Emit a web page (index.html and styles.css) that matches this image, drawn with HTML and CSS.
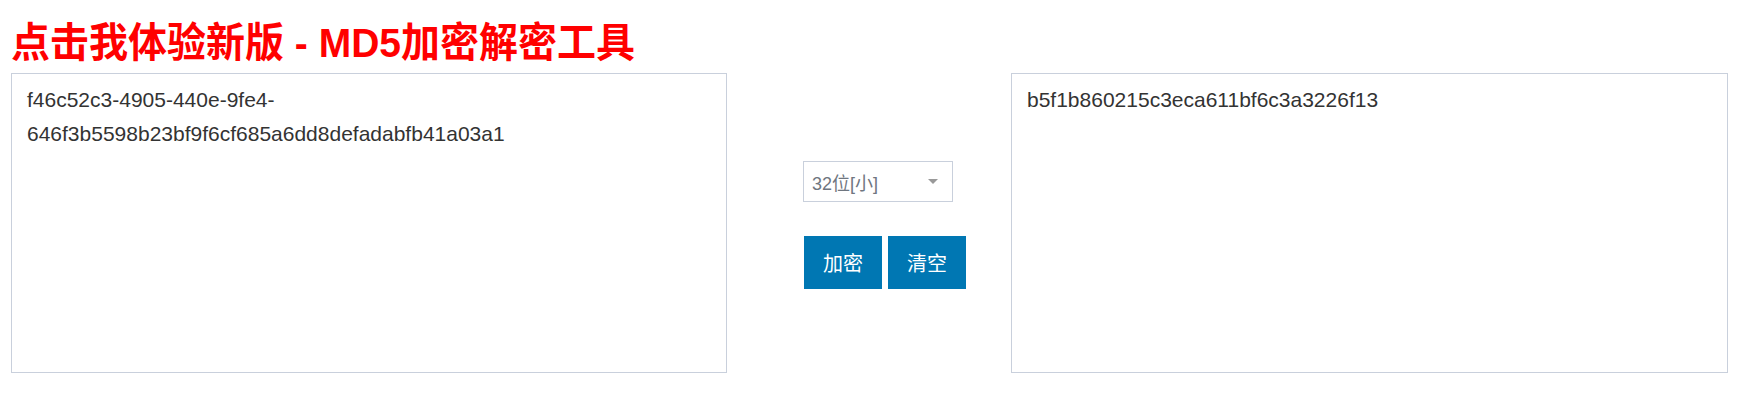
FILE: index.html
```html
<!DOCTYPE html>
<html lang="zh-CN">
<head>
<meta charset="utf-8">
<title>MD5加密解密工具</title>
<link rel="stylesheet" href="styles.css">
</head>
<body>
<div class="page">
  <h1 class="title">点击我体验新版 - MD5加密解密工具</h1>
  <div class="tool">
    <textarea class="box box-left" readonly>f46c52c3-4905-440e-9fe4-646f3b5598b23bf9f6cf685a6dd8defadabfb41a03a1</textarea>
    <div class="controls">
      <div class="select">
        <span class="select-text">32位[小]</span>
        <span class="select-arrow"></span>
      </div>
      <div class="buttons">
        <button class="btn">加密</button>
        <button class="btn">清空</button>
      </div>
    </div>
    <textarea class="box box-right" readonly>b5f1b860215c3eca611bf6c3a3226f13</textarea>
  </div>
</div>
</body>
</html>
```
FILE: styles.css
```css
html, body {
  margin: 0;
  padding: 0;
  background: #ffffff;
}
body {
  margin: 8px;
  font-family: "Liberation Sans", "Noto Sans CJK SC", sans-serif;
}
.page {
  padding-left: 3px;
}
.title {
  margin: 14px 0 7px 0;
  font-size: 39px;
  line-height: 44px;
  font-weight: bold;
  color: #ff0000;
  font-family: "Liberation Sans", "Noto Sans CJK SC", sans-serif;
  transform: scaleY(1.04);
  transform-origin: 0 80%;
}
.tool {
  display: flex;
  align-items: flex-start;
}
.box {
  box-sizing: border-box;
  height: 300px;
  margin: 0;
  padding: 9px 15px;
  border: 1px solid #c9d0dc;
  border-radius: 0;
  resize: none;
  overflow: hidden;
  font-family: "Liberation Sans", "Noto Sans CJK SC", sans-serif;
  font-size: 21px;
  line-height: 34px;
  color: #333333;
  background: #ffffff;
  outline: none;
}
.box-left {
  width: 716px;
}
.box-right {
  width: 717px;
}
.controls {
  width: 284px;
  box-sizing: border-box;
  padding: 88px 0 0 76px;
  display: flex;
  flex-direction: column;
  align-items: flex-start;
  gap: 34px;
}
.select {
  box-sizing: border-box;
  width: 150px;
  height: 41px;
  border: 1px solid #c9d0dc;
  display: flex;
  align-items: center;
  justify-content: space-between;
  padding: 0 14px 0 8px;
  background: #fff;
}
.select-text {
  font-size: 18px;
  color: #6f7680;
}
.select-arrow {
  width: 0;
  height: 0;
  border-left: 5px solid transparent;
  border-right: 5px solid transparent;
  border-top: 5px solid #999999;
}
.buttons {
  display: flex;
  gap: 6px;
  padding-left: 1px;
}
.btn {
  box-sizing: border-box;
  width: 78px;
  height: 53px;
  border: none;
  margin: 0;
  padding: 0;
  background: #0077b3;
  color: #ffffff;
  font-family: "Liberation Sans", "Noto Sans CJK SC", sans-serif;
  font-size: 20px;
  cursor: pointer;
}
```
